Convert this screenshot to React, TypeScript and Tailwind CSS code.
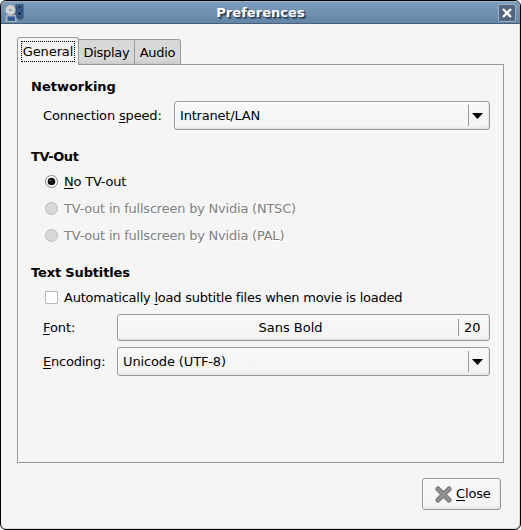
import React from "react";

const button =
  "rounded-[3px] border border-[#999999] bg-[linear-gradient(to_bottom,#f8f8f8,#f5f5f5_85%,#e9e9e9)] shadow-[inset_-1px_-1px_1px_#e4e4e4,inset_1px_1px_0_#fcfcfc]";

function Heading({ children, className = "" }: { children: React.ReactNode; className?: string }) {
  return <h2 className={`h-4 text-[13px] leading-4 font-bold ${className}`}>{children}</h2>;
}

function Key({ children }: { children: string }) {
  return <span className="underline decoration-1 underline-offset-2">{children}</span>;
}

function Combo({ children, className = "" }: { children: string; className?: string }) {
  return (
    <div className={`flex h-[29px] items-center pl-[5px] ${button} ${className}`}>
      <span className="flex-1">{children}</span>
      <span className="h-[21px] w-px bg-[#999]" />
      <svg className="mr-[6px] ml-[3px]" width="11" height="6" viewBox="0 0 11 6">
        <path d="M0 0H11L5.5 6Z" fill="#000" />
      </svg>
    </div>
  );
}

function Radio({ children, on = false }: { children: React.ReactNode; on?: boolean }) {
  return (
    <label
      className={`flex h-[27px] items-center pl-[14px] tracking-[-0.22px] ${on ? "" : "text-[#808080] [text-shadow:1px_1px_0_#fff]"}`}
    >
      <svg className="mr-[6px]" width="13" height="13" viewBox="0 0 13 13">
        <circle cx="6.5" cy="6.5" r="6" fill={on ? "#fff" : "#d9d9d9"} stroke={on ? "#858585" : "#b8b8b8"} />
        {on && <circle cx="6.5" cy="6.5" r="3.8" fill="#0a0a0a" />}
        {on && <circle cx="5.4" cy="5.4" r="1" fill="#666" />}
      </svg>
      <span>{children}</span>
    </label>
  );
}

function AppIcon() {
  return (
    <svg width="20" height="20" viewBox="0 0 20 20">
      <path d="M10.5 1.5L18.5 1V15L16 17L10.5 15Z" fill="#3d4f66" />
      <path d="M12 1.5H17V15H12Z" fill="#2c568f" />
      <circle cx="14.5" cy="4.5" r="1.7" fill="#17243d" stroke="#4576b5" />
      <circle cx="14.5" cy="10.5" r="2.2" fill="#17243d" stroke="#4576b5" />
      <circle cx="5.4" cy="7" r="4.9" fill="#d4d4cf" stroke="#aaa" strokeWidth=".6" />
      <circle cx="5.4" cy="7" r="1.3" fill="#8497a8" />
      <path d="M1 12H11L12 19H0Z" fill="#aab2b8" />
      <path d="M2.5 13.5H10V18H2.5Z" fill="#2f5b98" />
      <circle cx="6" cy="15.8" r="1.4" fill="#132b50" stroke="#5a8aca" strokeWidth=".6" />
    </svg>
  );
}

export default function App() {
  return (
    <div className="h-[530px] w-[521px] bg-white font-['DejaVu_Sans',sans-serif] text-[13px] leading-4 text-black">
      <div className="flex h-[530px] w-[521px] flex-col overflow-hidden rounded-[6px] border border-black bg-[#f5f5f5] shadow-[inset_-1px_-1px_0_#d8d8d8]">
        <header className="flex h-[23px] shrink-0 items-center border-t border-b border-t-[#9bb5ce] border-b-[#48607a] bg-[linear-gradient(to_bottom,#7d9dbd,#6485a6)] pr-[4px] pl-[4px]">
          <AppIcon />
          <h1 className="flex-1 pr-[2px] text-center text-[13px] font-bold tracking-[0.05px] text-white [text-shadow:1px_1px_0_#2c3d50,2px_2px_1px_#3d526a]">
            Preferences
          </h1>
          <span className="flex size-[18px] items-center justify-center rounded-[2px] border border-[#9bb0c6] bg-[#52677e]">
            <svg width="10" height="10" viewBox="0 0 10 10">
              <path d="M1 1L9 9M9 1L1 9" stroke="#fff" strokeWidth="2.3" />
            </svg>
          </span>
        </header>

        <main className="flex flex-1 flex-col pt-[13px] pr-[16px] pl-[16px]">
          <nav className="z-10 flex h-[28px] items-end">
            <span className="flex h-[28px] w-[62px] justify-center rounded-t-[3px] border border-b-0 border-[#999] bg-[#f5f5f5] pt-[3px]">
              <span className="flex h-[21px] w-[54px] items-center justify-center border border-dotted border-black tracking-[-0.1px]">
                General
              </span>
            </span>
            <span className="flex h-[26px] w-[56px] items-center justify-center border-t border-r border-b border-[#999] bg-[linear-gradient(to_bottom,#d8d8d8_80%,#cacaca)] pt-px tracking-[-0.3px]">
              Display
            </span>
            <span className="flex h-[26px] w-[46px] items-center justify-center rounded-tr-[3px] border-t border-r border-b border-[#999] bg-[linear-gradient(to_bottom,#d8d8d8_80%,#cacaca)] pt-px tracking-[-0.3px]">
              Audio
            </span>
          </nav>

          <section className="-mt-px flex h-[399px] flex-col border border-[#999] pr-[13px] pl-[13px]">
            <Heading className="mt-[14px]">Networking</Heading>
            <div className="mt-[6px] flex items-center pl-[12px]">
              <span className="w-[131px] tracking-[-0.16px]">
                Connection <Key>s</Key>peed:
              </span>
              <Combo className="flex-1 tracking-[-0.2px]">Intranet/LAN</Combo>
            </div>

            <Heading className="mt-[19px] tracking-[-0.4px]">TV-Out</Heading>
            <div className="mt-[3px]">
              <Radio on>
                <Key>N</Key>o TV-out
              </Radio>
              <Radio>TV-out in fullscreen by Nvidia (NTSC)</Radio>
              <Radio>TV-out in fullscreen by Nvidia (PAL)</Radio>
            </div>

            <Heading className="mt-[16px] tracking-[-0.15px]">Text Subtitles</Heading>
            <label className="mt-[3px] flex h-[27px] items-center pl-[14px] tracking-[-0.235px]">
              <span className="mr-[6px] size-[13px] rounded-[1px] border border-[#b8b8b8] bg-white" />
              <span>
                Automatically <Key>l</Key>oad subtitle files when movie is loaded
              </span>
            </label>
            <div className="mt-[3px] flex items-center pl-[12px]">
              <span className="w-[74px] tracking-[-0.1px]">
                <Key>F</Key>ont:
              </span>
              <div className={`flex h-[27px] flex-1 items-center ${button}`}>
                <span className="flex-1 pl-[5px] text-center">Sans Bold</span>
                <span className="h-[17px] w-px bg-[#999]" />
                <span className="w-[30px] pl-[5px]">20</span>
              </div>
            </div>
            <div className="mt-[6px] flex items-center pl-[12px]">
              <span className="w-[74px] tracking-[-0.22px]">
                <Key>E</Key>ncoding:
              </span>
              <Combo className="flex-1 tracking-[-0.13px]">Unicode (UTF-8)</Combo>
            </div>
          </section>

          <footer className="mt-[15px] flex justify-end pr-[3px]">
            <button className={`flex h-[32px] w-[79px] items-center pl-[12px] ${button}`}>
              <svg className="mr-[4px]" width="17" height="17" viewBox="0 0 17 17">
                <path d="M3 3L14 14M14 3L3 14" stroke="#6c6c6c" strokeWidth="5" strokeLinecap="round" />
                <path d="M3 3L14 14M14 3L3 14" stroke="#8f908d" strokeWidth="3.2" strokeLinecap="round" />
              </svg>
              <span className="tracking-[-0.15px]">
                <Key>C</Key>lose
              </span>
            </button>
          </footer>
        </main>
      </div>
    </div>
  );
}
